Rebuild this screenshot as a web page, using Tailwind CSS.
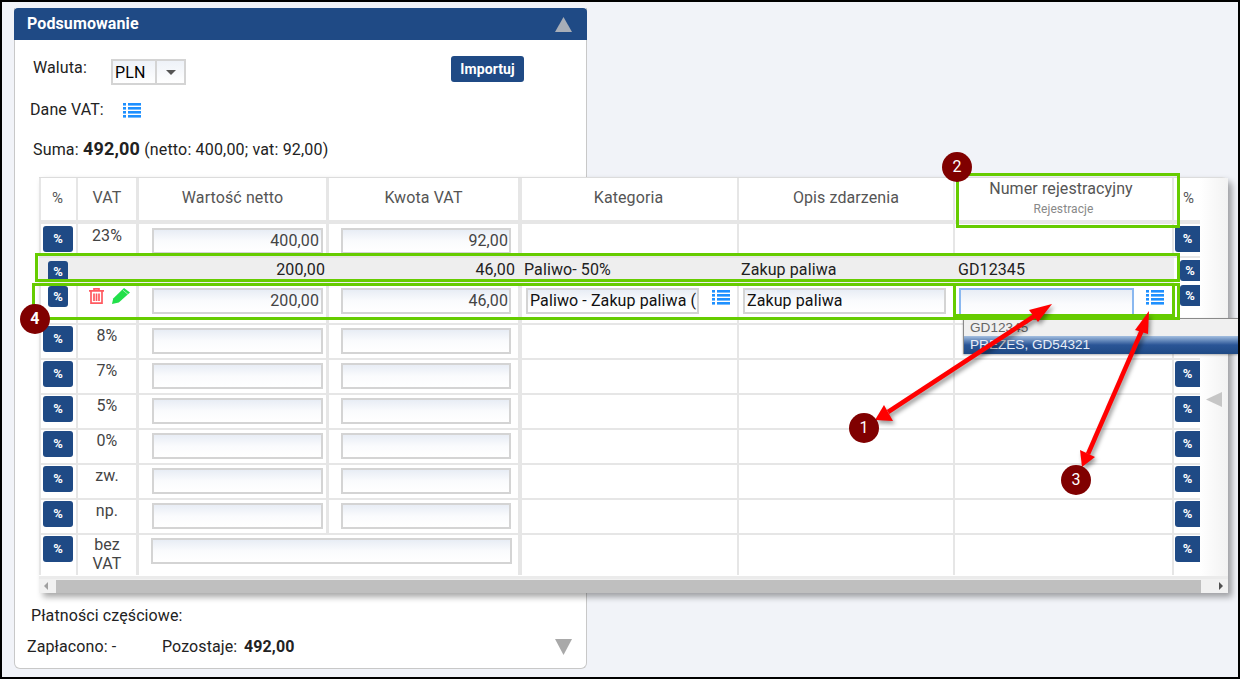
<!DOCTYPE html>
<html lang="pl">
<head>
    <meta charset="UTF-8">
    <title>Podsumowanie</title>
    <script src="https://cdn.jsdelivr.net/npm/@tailwindcss/browser@4"></script>
</head>
<body class="bg-[#f1f3f8]">
<div class="relative w-[1240px] h-[679px] overflow-hidden bg-[#f1f3f8] pt-2 pl-[14px] font-[Roboto,sans-serif] text-base tracking-[0.1px] text-[#222]">

    <!-- karta -->
    <div class="w-[573px] h-[661px] bg-white border-x border-b border-[#c8c8c8] rounded-b-md">
        <div class="flex items-center justify-between h-8 -mx-px pl-[13px] pr-[15px] bg-[#1f4a85] rounded-t-sm text-white font-bold">
            <span>Podsumowanie</span>
            <svg width="17" height="15" viewBox="0 0 17 15"><polygon points="8.5,0 17,15 0,15" fill="#a8aeb8"/></svg>
        </div>

        <div class="flex items-start h-[29px] pt-0 mt-4 pl-[18px]">
            <span class="w-[78px] leading-6">Waluta:</span>
            <div class="flex w-[75px] h-[26px] mt-[3px] border-2 border-[#d4d4d4] bg-linear-to-b from-[#eef2f8] to-white">
                <span class="w-[44px] pl-[2px] leading-[24px] border-r-2 border-[#d4d4d4] text-black">PLN</span>
                <span class="flex flex-1 items-center justify-center">
                    <svg width="10" height="5" viewBox="0 0 10 5"><polygon points="0,0 10,0 5,5" fill="#555"/></svg>
                </span>
            </div>
            <div class="flex items-center justify-center w-[73px] h-[26px] ml-[265px] rounded-[3px] bg-[#1f4a85] text-white text-sm font-bold">Importuj</div>
        </div>

        <div class="flex items-center h-6 mt-[13px] pl-[15px]">
            <span class="w-[93px]">Dane VAT:</span>
            <svg class="w-[18px] h-[15px]" viewBox="0 0 18 15" fill="#1e90ff"><rect y="0" width="3" height="2.6"/><rect x="5" y="0" width="13" height="2.6"/><rect y="4" width="3" height="2.6"/><rect x="5" y="4" width="13" height="2.6"/><rect y="8" width="3" height="2.6"/><rect x="5" y="8" width="13" height="2.6"/><rect y="12" width="3" height="2.6"/><rect x="5" y="12" width="13" height="2.6"/></svg>
        </div>

        <div class="h-6 mt-[15px] pl-[18px] leading-6 tracking-[0.17px]">Suma: <b class="text-[18px]">492,00</b> (netto: 400,00; vat: 92,00)</div>

        <!-- tabela, wystaje poza karte -->
        <div class="w-[1189px] h-[416px] mt-4 ml-6 bg-white border-t border-[#dcdcdc] rounded-tr-md shadow-[4px_4px_6px_rgba(0,0,0,0.35)] text-[#444]">
            <div class="flex h-[398px]">
                <div class="w-[1161px]">
                    <!-- naglowek -->
                    <div class="grid grid-cols-[39px_61px_190px_193px_217px_216px_219px_26px] h-[46px] border-b-4 border-[#e6e6e6] text-center text-[#555]">
                        <div class="border-x-2 border-[#e6e6e6] pr-[2px] text-[15px] leading-[40px]">%</div>
                        <div class="border-r-[3px] border-[#e6e6e6] leading-[40px]">VAT</div>
                        <div class="border-r-[3px] border-[#e6e6e6] leading-[40px]">Wartość netto</div>
                        <div class="border-r-4 border-[#e6e6e6] leading-[40px]">Kwota VAT</div>
                        <div class="border-r-2 border-[#e6e6e6] pr-[2px] leading-[40px]">Kategoria</div>
                        <div class="border-r-2 border-[#e6e6e6] leading-[40px]">Opis zdarzenia</div>
                        <div class="border-r-2 border-[#e6e6e6] pt-[1px]">
                            <div class="pr-[5px] leading-5">Numer rejestracyjny</div>
                            <div class="text-xs leading-5 text-[#888]">Rejestracje</div>
                        </div>
                        <div class="pl-[3px] text-[15px] leading-[40px]">%</div>
                    </div>

                    <!-- 23% -->
                    <div class="grid grid-cols-[39px_61px_190px_193px_217px_216px_219px_26px] h-[34px] border-b-2 border-[#e6e6e6]">
                        <div class="border-x-2 border-[#e6e6e6] pl-[2px] pt-[2px]"><div class="flex items-center justify-center w-[30px] h-[26px] rounded-[3px] bg-[#1f4a85] text-white text-[13px] font-bold">%</div></div>
                        <div class="border-r-[3px] border-[#e6e6e6] text-center leading-[23px]">23%</div>
                        <div class="border-r-[3px] border-[#e6e6e6] pl-[13px] pt-1"><div class="w-[171px] h-[26px] border-2 border-[#d4d4d4] bg-linear-to-b from-[#e8edf5] via-[#fafbfd] to-white pr-[2px] text-right leading-[22px]">400,00</div></div>
                        <div class="border-r-4 border-[#e6e6e6] pl-3 pt-1"><div class="w-[170px] h-[26px] border-2 border-[#d4d4d4] bg-linear-to-b from-[#e8edf5] via-[#fafbfd] to-white pr-[1px] text-right leading-[22px]">92,00</div></div>
                        <div class="border-r-2 border-[#e6e6e6]"></div>
                        <div class="border-r-2 border-[#e6e6e6]"></div>
                        <div class="border-r-2 border-[#e6e6e6]"></div>
                        <div class="pl-[1px] pt-[2px]"><div class="flex items-center justify-center w-[25px] h-[26px] rounded-l-[3px] bg-[#1f4a85] text-white text-[13px] font-bold">%</div></div>
                    </div>

                    <!-- pozycja zapisana -->
                    <div class="grid grid-cols-[39px_61px_190px_193px_217px_216px_219px_26px] h-[25px] bg-[#eeeeee] leading-[24px] text-[#222]">
                        <div class="pl-[9px] pt-[3px]"><div class="flex items-center justify-center w-5 h-[21px] rounded-[3px] bg-[#1f4a85] text-white text-[13px] font-bold">%</div></div>
                        <div></div>
                        <div class="pr-[4px] text-right">200,00</div>
                        <div class="pr-[7px] text-right">46,00</div>
                        <div class="pl-[2px]">Paliwo- 50%</div>
                        <div class="pl-[2px]">Zakup paliwa</div>
                        <div class="pl-[3px]">GD12345</div>
                        <div class="bg-white pl-[6px] pt-[2px]"><div class="flex items-center justify-center w-5 h-[21px] rounded-l-[3px] bg-[#1f4a85] text-white text-[13px] font-bold">%</div></div>
                    </div>

                    <!-- pozycja w edycji -->
                    <div class="grid grid-cols-[39px_61px_190px_193px_217px_216px_219px_26px] h-[42px] border-b-2 border-[#e6e6e6]">
                        <div class="border-x-2 border-[#e6e6e6] pl-[7px] pt-[3px]"><div class="flex items-center justify-center w-5 h-[21px] rounded-[3px] bg-[#1f4a85] text-white text-[13px] font-bold">%</div></div>
                        <div class="flex items-start gap-2 border-r-[3px] border-[#e6e6e6] pl-[11px] pt-[5px]">
                            <svg class="w-[15px] h-4" viewBox="0 0 15 16" fill="none" stroke="#ff5a60" stroke-width="1.7"><path d="M0 2.8h15M5 2.8V.8h5v2M2 3v12.2h11V3M5 5.5v7.5M7.5 5.5v7.5M10 5.5v7.5"/></svg>
                            <svg class="w-[18px] h-4" viewBox="0 0 18 16"><path d="M0 16l1.2-5.6L12 0l6 4.6L6.8 14.6z" fill="#22e04a"/><path d="M11 2.2l5 4.2" stroke="#bff5c8" stroke-width="0.8"/></svg>
                        </div>
                        <div class="border-r-[3px] border-[#e6e6e6] pl-[13px] pt-[5px]"><div class="w-[171px] h-[26px] border-2 border-[#d4d4d4] bg-linear-to-b from-[#e8edf5] via-[#fafbfd] to-white pr-[2px] text-right leading-[22px]">200,00</div></div>
                        <div class="border-r-4 border-[#e6e6e6] pl-3 pt-[5px]"><div class="w-[170px] h-[26px] border-2 border-[#d4d4d4] bg-linear-to-b from-[#e8edf5] via-[#fafbfd] to-white pr-[1px] text-right leading-[22px]">46,00</div></div>
                        <div class="flex items-start border-r-2 border-[#e6e6e6] pl-1 pt-[5px]">
                            <div class="w-[173px] h-[26px] overflow-hidden whitespace-nowrap border-2 border-[#d4d4d4] bg-linear-to-b from-[#e8edf5] via-[#fafbfd] to-white px-[2px] leading-[22px] text-[#111]">Paliwo - Zakup paliwa (</div>
                            <svg class="w-[18px] h-[15px] ml-[13px] mt-[2px]" viewBox="0 0 18 15" fill="#1e90ff"><rect y="0" width="3" height="2.6"/><rect x="5" y="0" width="13" height="2.6"/><rect y="4" width="3" height="2.6"/><rect x="5" y="4" width="13" height="2.6"/><rect y="8" width="3" height="2.6"/><rect x="5" y="8" width="13" height="2.6"/><rect y="12" width="3" height="2.6"/><rect x="5" y="12" width="13" height="2.6"/></svg>
                        </div>
                        <div class="border-r-2 border-[#e6e6e6] pl-1 pt-[5px]"><div class="w-[203px] h-[26px] border-2 border-[#d4d4d4] bg-linear-to-b from-[#e8edf5] via-[#fafbfd] to-white px-[2px] leading-[22px] text-[#111]">Zakup paliwa</div></div>
                        <div class="flex items-start border-r-2 border-[#e6e6e6] pl-1 pt-[5px]">
                            <div class="w-[175px] h-[32px] border-2 border-[#8ab8f0] bg-linear-to-b from-[#e8edf5] via-[#fafbfd] to-white"></div>
                            <svg class="w-[18px] h-[15px] ml-3 mt-[2px]" viewBox="0 0 18 15" fill="#1e90ff"><rect y="0" width="3" height="2.6"/><rect x="5" y="0" width="13" height="2.6"/><rect y="4" width="3" height="2.6"/><rect x="5" y="4" width="13" height="2.6"/><rect y="8" width="3" height="2.6"/><rect x="5" y="8" width="13" height="2.6"/><rect y="12" width="3" height="2.6"/><rect x="5" y="12" width="13" height="2.6"/></svg>
                        </div>
                        <div class="pl-[6px] pt-[2px]"><div class="flex items-center justify-center w-5 h-[21px] rounded-l-[3px] bg-[#1f4a85] text-white text-[13px] font-bold">%</div></div>
                    </div>

                    <!-- 8% -->
                    <div class="grid grid-cols-[39px_61px_190px_193px_217px_216px_219px_26px] h-[35px] border-b-2 border-[#e6e6e6]">
                        <div class="border-x-2 border-[#e6e6e6] pl-[2px] pt-[1px]"><div class="flex items-center justify-center w-[30px] h-[26px] rounded-[3px] bg-[#1f4a85] text-white text-[13px] font-bold">%</div></div>
                        <div class="border-r-[3px] border-[#e6e6e6] text-center leading-[22px]">8%</div>
                        <div class="border-r-[3px] border-[#e6e6e6] pl-[13px] pt-[3px]"><div class="w-[171px] h-[26px] border-2 border-[#d4d4d4] bg-linear-to-b from-[#e8edf5] via-[#fafbfd] to-white"></div></div>
                        <div class="border-r-4 border-[#e6e6e6] pl-3 pt-[3px]"><div class="w-[170px] h-[26px] border-2 border-[#d4d4d4] bg-linear-to-b from-[#e8edf5] via-[#fafbfd] to-white"></div></div>
                        <div class="border-r-2 border-[#e6e6e6]"></div>
                        <div class="border-r-2 border-[#e6e6e6]"></div>
                        <div class="border-r-2 border-[#e6e6e6]"></div>
                        <div class="pl-[1px] pt-[1px]"><div class="flex items-center justify-center w-[25px] h-[26px] rounded-l-[3px] bg-[#1f4a85] text-white text-[13px] font-bold">%</div></div>
                    </div>

                    <!-- 7% -->
                    <div class="grid grid-cols-[39px_61px_190px_193px_217px_216px_219px_26px] h-[35px] border-b-2 border-[#e6e6e6]">
                        <div class="border-x-2 border-[#e6e6e6] pl-[2px] pt-[1px]"><div class="flex items-center justify-center w-[30px] h-[26px] rounded-[3px] bg-[#1f4a85] text-white text-[13px] font-bold">%</div></div>
                        <div class="border-r-[3px] border-[#e6e6e6] text-center leading-[22px]">7%</div>
                        <div class="border-r-[3px] border-[#e6e6e6] pl-[13px] pt-[3px]"><div class="w-[171px] h-[26px] border-2 border-[#d4d4d4] bg-linear-to-b from-[#e8edf5] via-[#fafbfd] to-white"></div></div>
                        <div class="border-r-4 border-[#e6e6e6] pl-3 pt-[3px]"><div class="w-[170px] h-[26px] border-2 border-[#d4d4d4] bg-linear-to-b from-[#e8edf5] via-[#fafbfd] to-white"></div></div>
                        <div class="border-r-2 border-[#e6e6e6]"></div>
                        <div class="border-r-2 border-[#e6e6e6]"></div>
                        <div class="border-r-2 border-[#e6e6e6]"></div>
                        <div class="pl-[1px] pt-[1px]"><div class="flex items-center justify-center w-[25px] h-[26px] rounded-l-[3px] bg-[#1f4a85] text-white text-[13px] font-bold">%</div></div>
                    </div>

                    <!-- 5% -->
                    <div class="grid grid-cols-[39px_61px_190px_193px_217px_216px_219px_26px] h-[35px] border-b-2 border-[#e6e6e6]">
                        <div class="border-x-2 border-[#e6e6e6] pl-[2px] pt-[1px]"><div class="flex items-center justify-center w-[30px] h-[26px] rounded-[3px] bg-[#1f4a85] text-white text-[13px] font-bold">%</div></div>
                        <div class="border-r-[3px] border-[#e6e6e6] text-center leading-[22px]">5%</div>
                        <div class="border-r-[3px] border-[#e6e6e6] pl-[13px] pt-[3px]"><div class="w-[171px] h-[26px] border-2 border-[#d4d4d4] bg-linear-to-b from-[#e8edf5] via-[#fafbfd] to-white"></div></div>
                        <div class="border-r-4 border-[#e6e6e6] pl-3 pt-[3px]"><div class="w-[170px] h-[26px] border-2 border-[#d4d4d4] bg-linear-to-b from-[#e8edf5] via-[#fafbfd] to-white"></div></div>
                        <div class="border-r-2 border-[#e6e6e6]"></div>
                        <div class="border-r-2 border-[#e6e6e6]"></div>
                        <div class="border-r-2 border-[#e6e6e6]"></div>
                        <div class="pl-[1px] pt-[1px]"><div class="flex items-center justify-center w-[25px] h-[26px] rounded-l-[3px] bg-[#1f4a85] text-white text-[13px] font-bold">%</div></div>
                    </div>

                    <!-- 0% -->
                    <div class="grid grid-cols-[39px_61px_190px_193px_217px_216px_219px_26px] h-[35px] border-b-2 border-[#e6e6e6]">
                        <div class="border-x-2 border-[#e6e6e6] pl-[2px] pt-[1px]"><div class="flex items-center justify-center w-[30px] h-[26px] rounded-[3px] bg-[#1f4a85] text-white text-[13px] font-bold">%</div></div>
                        <div class="border-r-[3px] border-[#e6e6e6] text-center leading-[22px]">0%</div>
                        <div class="border-r-[3px] border-[#e6e6e6] pl-[13px] pt-[3px]"><div class="w-[171px] h-[26px] border-2 border-[#d4d4d4] bg-linear-to-b from-[#e8edf5] via-[#fafbfd] to-white"></div></div>
                        <div class="border-r-4 border-[#e6e6e6] pl-3 pt-[3px]"><div class="w-[170px] h-[26px] border-2 border-[#d4d4d4] bg-linear-to-b from-[#e8edf5] via-[#fafbfd] to-white"></div></div>
                        <div class="border-r-2 border-[#e6e6e6]"></div>
                        <div class="border-r-2 border-[#e6e6e6]"></div>
                        <div class="border-r-2 border-[#e6e6e6]"></div>
                        <div class="pl-[1px] pt-[1px]"><div class="flex items-center justify-center w-[25px] h-[26px] rounded-l-[3px] bg-[#1f4a85] text-white text-[13px] font-bold">%</div></div>
                    </div>

                    <!-- zw. -->
                    <div class="grid grid-cols-[39px_61px_190px_193px_217px_216px_219px_26px] h-[35px] border-b-2 border-[#e6e6e6]">
                        <div class="border-x-2 border-[#e6e6e6] pl-[2px] pt-[1px]"><div class="flex items-center justify-center w-[30px] h-[26px] rounded-[3px] bg-[#1f4a85] text-white text-[13px] font-bold">%</div></div>
                        <div class="border-r-[3px] border-[#e6e6e6] text-center leading-[22px]">zw.</div>
                        <div class="border-r-[3px] border-[#e6e6e6] pl-[13px] pt-[3px]"><div class="w-[171px] h-[26px] border-2 border-[#d4d4d4] bg-linear-to-b from-[#e8edf5] via-[#fafbfd] to-white"></div></div>
                        <div class="border-r-4 border-[#e6e6e6] pl-3 pt-[3px]"><div class="w-[170px] h-[26px] border-2 border-[#d4d4d4] bg-linear-to-b from-[#e8edf5] via-[#fafbfd] to-white"></div></div>
                        <div class="border-r-2 border-[#e6e6e6]"></div>
                        <div class="border-r-2 border-[#e6e6e6]"></div>
                        <div class="border-r-2 border-[#e6e6e6]"></div>
                        <div class="pl-[1px] pt-[1px]"><div class="flex items-center justify-center w-[25px] h-[26px] rounded-l-[3px] bg-[#1f4a85] text-white text-[13px] font-bold">%</div></div>
                    </div>

                    <!-- np. -->
                    <div class="grid grid-cols-[39px_61px_190px_193px_217px_216px_219px_26px] h-[35px] border-b-2 border-[#e6e6e6]">
                        <div class="border-x-2 border-[#e6e6e6] pl-[2px] pt-[1px]"><div class="flex items-center justify-center w-[30px] h-[26px] rounded-[3px] bg-[#1f4a85] text-white text-[13px] font-bold">%</div></div>
                        <div class="border-r-[3px] border-[#e6e6e6] text-center leading-[22px]">np.</div>
                        <div class="border-r-[3px] border-[#e6e6e6] pl-[13px] pt-[3px]"><div class="w-[171px] h-[26px] border-2 border-[#d4d4d4] bg-linear-to-b from-[#e8edf5] via-[#fafbfd] to-white"></div></div>
                        <div class="border-r-4 border-[#e6e6e6] pl-3 pt-[3px]"><div class="w-[170px] h-[26px] border-2 border-[#d4d4d4] bg-linear-to-b from-[#e8edf5] via-[#fafbfd] to-white"></div></div>
                        <div class="border-r-2 border-[#e6e6e6]"></div>
                        <div class="border-r-2 border-[#e6e6e6]"></div>
                        <div class="border-r-2 border-[#e6e6e6]"></div>
                        <div class="pl-[1px] pt-[1px]"><div class="flex items-center justify-center w-[25px] h-[26px] rounded-l-[3px] bg-[#1f4a85] text-white text-[13px] font-bold">%</div></div>
                    </div>

                    <!-- bez VAT -->
                    <div class="grid grid-cols-[39px_61px_190px_193px_217px_216px_219px_26px] h-[40px]">
                        <div class="border-x-2 border-[#e6e6e6] pl-[2px] pt-[1px]"><div class="flex items-center justify-center w-[30px] h-[26px] rounded-[3px] bg-[#1f4a85] text-white text-[13px] font-bold">%</div></div>
                        <div class="border-r-[3px] border-[#e6e6e6] text-center leading-[19px]">bez<br>VAT</div>
                        <div class="col-span-2 border-r-4 border-[#e6e6e6] pl-3 pt-[3px]"><div class="w-[361px] h-[26px] border-2 border-[#d4d4d4] bg-linear-to-b from-[#e8edf5] via-[#fafbfd] to-white"></div></div>
                        <div class="border-r-2 border-[#e6e6e6]"></div>
                        <div class="border-r-2 border-[#e6e6e6]"></div>
                        <div class="border-r-2 border-[#e6e6e6]"></div>
                        <div class="pl-[1px] pt-[1px]"><div class="flex items-center justify-center w-[25px] h-[26px] rounded-l-[3px] bg-[#1f4a85] text-white text-[13px] font-bold">%</div></div>
                    </div>
                </div>

                <!-- boczny pasek ze strzalka -->
                <div class="flex flex-1 items-center justify-center bg-linear-to-r from-white to-[#f2f2f2] pt-[45px]">
                    <svg width="16" height="15" viewBox="0 0 16 15"><polygon points="0,7.5 16,0 16,15" fill="#c6c6c6"/></svg>
                </div>
            </div>

            <!-- pasek przewijania -->
            <div class="flex items-center h-[17px] border-t-[3px] border-[#ebebeb] bg-[#f1f1f1]">
                <svg class="ml-[5px]" width="4" height="8" viewBox="0 0 4 8"><polygon points="4,0 4,8 0,4" fill="#a0a0a0"/></svg>
                <div class="w-[1145px] h-[13px] ml-2 bg-[#bfbfbf]"></div>
                <svg class="ml-[18px]" width="4" height="8" viewBox="0 0 4 8"><polygon points="0,0 0,8 4,4" fill="#505050"/></svg>
            </div>
        </div>

        <div class="h-6 mt-[11px] pl-4 leading-6">Płatności częściowe:</div>
        <div class="flex items-center h-6 mt-[7px] pl-3 pr-[14px]">
            <span class="w-[135px]">Zapłacono: -</span>
            <span class="w-[82px]">Pozostaje:</span>
            <b>492,00</b>
            <svg class="ml-auto" width="17" height="16" viewBox="0 0 17 16"><polygon points="0,0 17,0 8.5,16" fill="#a9a9a9"/></svg>
        </div>
    </div>

    <!-- lista podpowiedzi -->
    <div class="absolute left-[963px] top-[318px] w-[275px] h-[36px] border-t border-l border-[#8a8a8a] font-[Liberation_Sans,sans-serif] text-[13.6px] tracking-normal shadow-[0_1px_2px_rgba(0,0,0,0.3)]">
        <div class="h-[17px] bg-[#f0f0f0] pl-[6px] leading-[17px] text-[#666]">GD12345</div>
        <div class="h-[18px] bg-linear-to-b from-[#a4bfe0] via-[#2a5596] to-[#1f4a85] pl-[6px] leading-[18px] text-[#e8eef8]">PREZES, GD54321</div>
    </div>

    <!-- zaznaczenia na zrzucie -->
    <div class="absolute left-[956px] top-[173px] w-[224px] h-[55px] border-[3px] border-[#66cc00]"></div>
    <div class="absolute left-[35px] top-[253px] w-[1145px] h-[29px] border-[3px] border-[#66cc00]"></div>
    <div class="absolute left-[32px] top-[283px] w-[1148px] h-[37px] border-[3px] border-[#66cc00]"></div>
    <div class="absolute left-[953px] top-[283px] w-[222px] h-[34px] border-[3px] border-[#66cc00]"></div>

    <svg class="absolute left-0 top-0 drop-shadow-[2px_3px_2px_rgba(0,0,0,0.4)]" width="1240" height="679" viewBox="0 0 1240 679" fill="#ff0000">
        <line x1="888" y1="412" x2="1036" y2="315" stroke="#ff0000" stroke-width="4.5"/>
        <polygon points="1052,304 1038,322 1029,310"/>
        <polygon points="875,420 893,421 884,405"/>
        <line x1="1088" y1="454" x2="1142" y2="330" stroke="#ff0000" stroke-width="4.5"/>
        <polygon points="1149,311 1148,334 1135,330"/>
        <polygon points="1082,467 1095,457 1080,450"/>
    </svg>

    <div class="absolute left-[942px] top-[152px] flex items-center justify-center w-[30px] h-[30px] rounded-full bg-[#800000] text-white">2</div>
    <div class="absolute left-[20px] top-[304px] flex items-center justify-center w-[30px] h-[30px] rounded-full bg-[#800000] text-white font-bold">4</div>
    <div class="absolute left-[849px] top-[413px] flex items-center justify-center w-[30px] h-[30px] rounded-full bg-[#800000] text-white">1</div>
    <div class="absolute left-[1061px] top-[465px] flex items-center justify-center w-[30px] h-[30px] rounded-full bg-[#800000] text-white">3</div>

    <!-- ramka zrzutu -->
    <div class="absolute inset-0 border-2 border-black pointer-events-none"></div>
</div>
</body>
</html>
